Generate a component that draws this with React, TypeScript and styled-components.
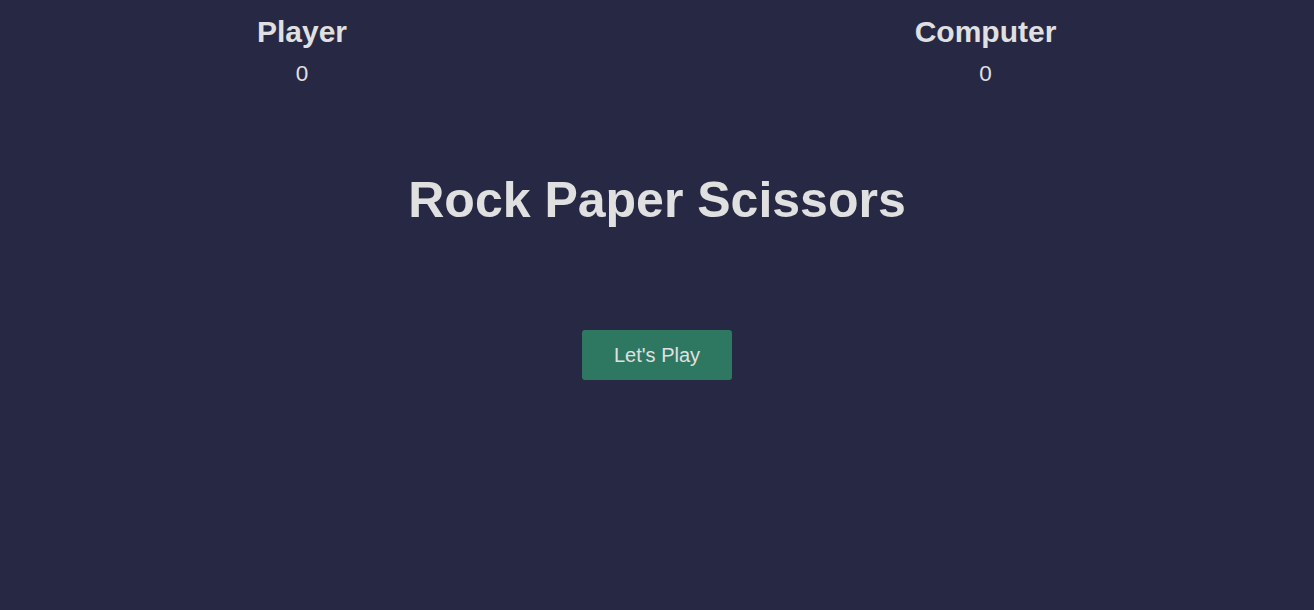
import React from "react";
import styled, { createGlobalStyle } from "styled-components";

const GlobalStyle = createGlobalStyle`
  html, body {
    margin: 0;
    padding: 0;
    background: #272844;
  }
  body {
    font-family: "Liberation Sans", Arial, sans-serif;
    color: #e0e0e0;
  }
`;

const Page = styled.main`
  min-height: 610px;
  padding-top: 15px;
  box-sizing: border-box;
  display: flex;
  flex-direction: column;
  align-items: center;
`;

const Scoreboard = styled.section`
  width: 100%;
  display: grid;
  grid-template-columns: 604fr 53fr 657fr;
`;

const ScoreColumn = styled.div<{ $col: number }>`
  grid-column: ${(p) => p.$col};
  display: flex;
  flex-direction: column;
  align-items: center;
`;

const Name = styled.h2`
  margin: 0;
  font-size: 30px;
  font-weight: 700;
  line-height: normal;
`;

const Score = styled.p`
  margin: 12px 0 0;
  font-size: 22.5px;
  line-height: normal;
`;

const Title = styled.h1`
  margin: 84px 0 0;
  font-size: 50px;
  font-weight: 700;
  line-height: normal;
  text-align: center;
`;

const PlayButton = styled.button`
  margin-top: 101px;
  width: 150px;
  height: 50px;
  border: none;
  border-radius: 3px;
  background: #2e7862;
  color: #e0e0e0;
  font-family: "Liberation Sans", Arial, sans-serif;
  font-size: 20px;
  cursor: pointer;
`;

export default function App() {
  return (
    <>
      <GlobalStyle />
      <Page>
        <Scoreboard>
          <ScoreColumn $col={1}>
            <Name>Player</Name>
            <Score>0</Score>
          </ScoreColumn>
          <ScoreColumn $col={3}>
            <Name>Computer</Name>
            <Score>0</Score>
          </ScoreColumn>
        </Scoreboard>
        <Title>Rock Paper Scissors</Title>
        <PlayButton>Let's Play</PlayButton>
      </Page>
    </>
  );
}
